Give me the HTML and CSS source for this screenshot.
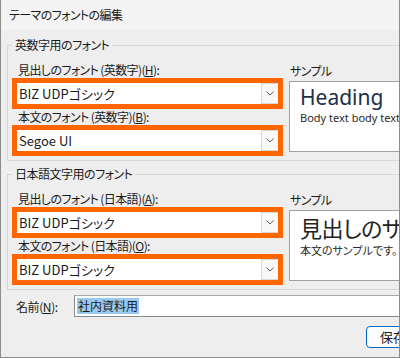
FILE: index.html
```html
<!DOCTYPE html>
<html>
<head>
    <meta charset="UTF-8">
    <meta name="viewport" content="width=device-width, initial-scale=1.0">
    <title>テーマのフォントの編集</title>
    <link rel="stylesheet" href="styles.css">
</head>
<body>
    <div class="window">
        <div class="titlebar">テーマのフォントの編集</div>
        <div class="content">
            <!-- Latin fonts -->
            <fieldset class="group">
                <legend>英数字用のフォント</legend>
                <div class="group-grid">
                    <div class="fields">
                        <div class="field-label">見出しのフォント (英数字)(<u>H</u>):</div>
                        <div class="mark">
                            <div class="combo">
                                <span class="combo-value">BIZ UDPゴシック</span>
                                <span class="combo-btn"><svg width="8" height="5" viewBox="0 0 8 5"><path d="M0.5 0.5 L4 4 L7.5 0.5" fill="none" stroke="#606060" stroke-width="1"/></svg></span>
                            </div>
                        </div>
                        <div class="field-label">本文のフォント (英数字)(<u>B</u>):</div>
                        <div class="mark">
                            <div class="combo">
                                <span class="combo-value">Segoe UI</span>
                                <span class="combo-btn"><svg width="8" height="5" viewBox="0 0 8 5"><path d="M0.5 0.5 L4 4 L7.5 0.5" fill="none" stroke="#606060" stroke-width="1"/></svg></span>
                            </div>
                        </div>
                    </div>
                    <div class="sample">
                        <div class="field-label sample-label">サンプル</div>
                        <div class="sample-box">
                            <div class="sample-heading latin">Heading</div>
                            <div class="sample-body latin">Body text body text body text</div>
                        </div>
                    </div>
                </div>
            </fieldset>

            <!-- Japanese fonts -->
            <fieldset class="group group-jp">
                <legend>日本語文字用のフォント</legend>
                <div class="group-grid">
                    <div class="fields">
                        <div class="field-label">見出しのフォント (日本語)(<u>A</u>):</div>
                        <div class="mark">
                            <div class="combo">
                                <span class="combo-value">BIZ UDPゴシック</span>
                                <span class="combo-btn"><svg width="8" height="5" viewBox="0 0 8 5"><path d="M0.5 0.5 L4 4 L7.5 0.5" fill="none" stroke="#606060" stroke-width="1"/></svg></span>
                            </div>
                        </div>
                        <div class="field-label">本文のフォント (日本語)(<u>O</u>):</div>
                        <div class="mark">
                            <div class="combo">
                                <span class="combo-value">BIZ UDPゴシック</span>
                                <span class="combo-btn"><svg width="8" height="5" viewBox="0 0 8 5"><path d="M0.5 0.5 L4 4 L7.5 0.5" fill="none" stroke="#606060" stroke-width="1"/></svg></span>
                            </div>
                        </div>
                    </div>
                    <div class="sample">
                        <div class="field-label sample-label">サンプル</div>
                        <div class="sample-box">
                            <div class="sample-heading jp">見出しのサンプルです</div>
                            <div class="sample-body">本文のサンプルです。</div>
                        </div>
                    </div>
                </div>
            </fieldset>

            <div class="name-row">
                <span class="name-label">名前(<u>N</u>):</span>
                <div class="name-input"><span class="selected">社内資料用</span></div>
            </div>

            <div class="actions">
                <button class="save-btn">保存(<u>S</u>)</button>
            </div>
        </div>
    </div>
</body>
</html>
```

FILE: styles.css
```css
body {
    margin: 0;
    font-family: "Noto Sans CJK JP", sans-serif;
    font-feature-settings: "palt";
    color: #1a1a1a;
}
.window {
    box-sizing: border-box;
    width: 400px;
    height: 358px;
    background-color: #eeeeee;
    border: 1px solid #8c8c8c;
    border-top: none;
    overflow: hidden;
}
.titlebar {
    height: 30px;
    line-height: 30px;
    padding-left: 8px;
    font-size: 12px;
    letter-spacing: -0.6px;
    background-color: #f4f4f4;
}
.content {
    width: 520px;
    padding-left: 6px;
}

/* Group boxes */
.group {
    margin: 6px 0 0 0;
    padding: 0 0 4px 4px;
    width: 500px;
    border: 1px solid #d6d6d6;
    min-width: 0;
}
.group legend {
    font-size: 12px;
    letter-spacing: -0.5px;
    line-height: 18px;
    padding: 0 3px;
}
.group-jp {
    margin-top: 4px;
}
.group-grid {
    display: flex;
    gap: 6px;
    margin-top: 8px;
}
.fields {
    flex: none;
    width: 271px;
}
.field-label {
    font-size: 12px;
    letter-spacing: -0.6px;
    line-height: 16px;
    height: 16px;
    padding-left: 6px;
}
.mark {
    border: 5px solid #ff6600;
}
.combo {
    display: flex;
    align-items: center;
    height: 21px;
    background-color: #ffffff;
}
.combo-value {
    padding-left: 2px;
    font-size: 13px;
}
.combo-btn {
    box-sizing: border-box;
    display: flex;
    align-items: center;
    justify-content: center;
    margin-left: auto;
    width: 17px;
    height: 21px;
    background-color: #f8f8f8;
    border: 1px solid #d8d8d8;
    border-right: none;
}

/* Sample preview */
.sample {
    flex: 1;
    min-width: 0;
}
.sample-label {
    padding-left: 1px;
    margin-top: 1px;
    margin-bottom: 2px;
}
.sample-box {
    box-sizing: border-box;
    height: 71px;
    padding: 1px 10px;
    background-color: #ffffff;
    border: 1px solid #a0a0a0;
    white-space: nowrap;
    overflow: hidden;
}
.sample-heading {
    font-size: 22px;
    line-height: 28px;
    color: #1e2f47;
}
.sample-heading.jp {
    line-height: 31px;
    letter-spacing: -0.5px;
    color: #222222;
}
.sample-body {
    font-size: 11px;
    line-height: 14px;
    color: #2a2a2a;
}
.latin {
    font-family: "Noto Sans", sans-serif;
}
.sample-heading.latin {
    font-size: 21px;
}

/* Name row */
.name-row {
    display: flex;
    align-items: center;
    margin-top: 5px;
}
.name-label {
    width: 58px;
    padding-left: 9px;
    font-size: 12px;
    letter-spacing: -0.4px;
}
.name-input {
    display: flex;
    align-items: center;
    width: 400px;
    height: 20px;
    padding-left: 2px;
    background-color: #ffffff;
    border: 1px solid #8a8a8a;
    border-top-color: #a8a8a8;
    font-size: 12px;
}
.selected {
    background-color: #99c9ef;
    padding: 0 1px;
    line-height: 16px;
}

/* Buttons */
.actions {
    margin-top: 6px;
    padding-left: 359px;
}
.save-btn {
    width: 80px;
    height: 22px;
    padding: 0 0 0 13px;
    text-align: left;
    font-family: "Noto Sans CJK JP", sans-serif;
    font-size: 13px;
    background-color: #fdfdfd;
    border: 1px solid #0067c0;
    border-radius: 4px;
    color: #1a1a1a;
}
```
